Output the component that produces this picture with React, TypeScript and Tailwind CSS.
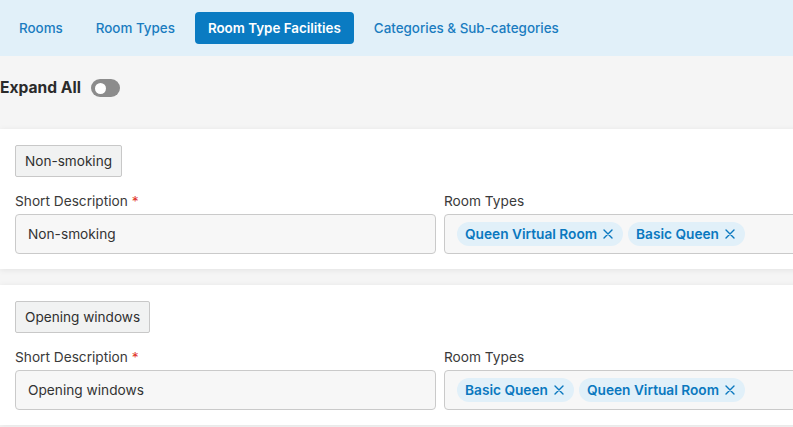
// ── Data ──────────────────────────────────────────────────────────────────────

const tabs = ["Rooms", "Room Types", "Room Type Facilities", "Categories & Sub-categories"];

const facilities = [
  { name: "Non-smoking", roomTypes: ["Queen Virtual Room", "Basic Queen"] },
  { name: "Opening windows", roomTypes: ["Basic Queen", "Queen Virtual Room"] },
];

// ── Pieces ────────────────────────────────────────────────────────────────────

function Chip({ label }: { label: string }) {
  return (
    <span className="flex h-6 items-center gap-[6px] rounded-full bg-[#e1f0f9] pl-2 pr-[10px] text-[13.7px] font-semibold text-[#0a78bf]">
      {label}
      <svg viewBox="0 0 10 10" className="h-[10px] w-[10px]" fill="none" stroke="currentColor" strokeWidth={1.4} strokeLinecap="round">
        <path d="M1 1l8 8M9 1L1 9" />
      </svg>
    </span>
  );
}

function FacilityCard({ name, roomTypes }: { name: string; roomTypes: string[] }) {
  return (
    <div className="bg-white px-[15px] pt-4 pb-[15px] shadow-[0_1px_6px_rgba(0,0,0,0.08)]">
      <div className="flex">
        <div className="flex h-8 items-center rounded-[2px] border border-[#c8c8c8] bg-[#f1f2f2] px-[9px] text-[13.6px] text-[#2f2f2f]">
          {name}
        </div>
      </div>

      <div className="mt-[14px] grid grid-cols-2 gap-2">
        <div>
          <div className="mb-[3px] text-[13.7px] leading-5 text-[#3a3a3a]">
            Short Description <span className="text-[#e0352b]">*</span>
          </div>
          <div className="flex h-10 items-center rounded border border-[#cacaca] bg-[#f7f7f7] px-3 text-[13.7px] text-[#333]">
            {name}
          </div>
        </div>
        <div>
          <div className="mb-[3px] text-[13.7px] leading-5 text-[#3a3a3a]">Room Types</div>
          <div className="flex h-10 items-center gap-[5px] rounded border border-[#cacaca] bg-[#f7f7f7] px-3">
            {roomTypes.map((rt) => (
              <Chip key={rt} label={rt} />
            ))}
          </div>
        </div>
      </div>
    </div>
  );
}

// ── Page ──────────────────────────────────────────────────────────────────────

export default function App() {
  return (
    <div className="h-[427px] w-[793px] overflow-hidden bg-[#f5f5f5] font-['Inter',sans-serif]">
      <div className="w-[880px]">
        {/* Tabs */}
        <div className="flex h-14 items-center gap-[7px] bg-[#e1f0f9] pl-[6px]">
          {tabs.map((t) => (
            <div
              key={t}
              className={
                t === "Room Type Facilities"
                  ? "flex h-8 items-center rounded bg-[#0a7bc2] px-[13px] text-[13.4px] font-semibold text-white"
                  : "flex h-8 items-center px-[13px] text-[13.4px] font-medium text-[#1a7cc0]"
              }
            >
              {t}
            </div>
          ))}
        </div>

        {/* Expand all */}
        <div className="flex h-[73px] items-center gap-[10px] pb-[9px]">
          <span className="text-[15.6px] font-bold text-[#2b2b2b]">Expand All</span>
          <div className="flex h-[18px] w-[29px] items-center rounded-full bg-[#8c8c8c] px-[4px]">
            <div className="h-[11px] w-[11px] rounded-full bg-white" />
          </div>
        </div>

        <div className="flex flex-col gap-4">
          {facilities.map((f) => (
            <FacilityCard key={f.name} name={f.name} roomTypes={f.roomTypes} />
          ))}
        </div>
      </div>
    </div>
  );
}
